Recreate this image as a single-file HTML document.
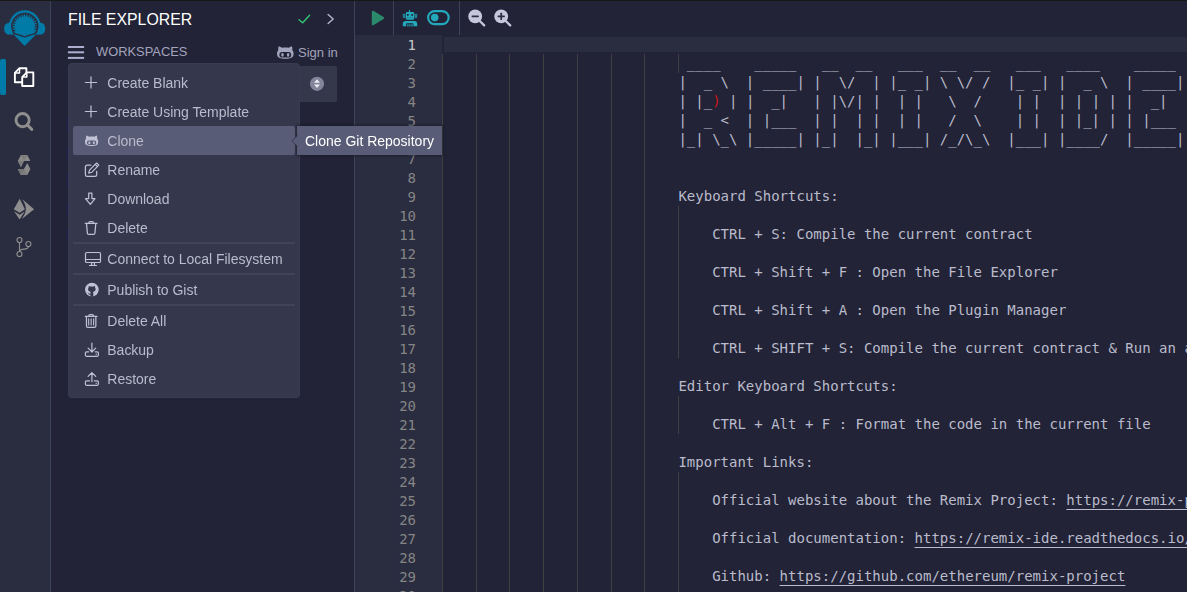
<!DOCTYPE html>
<html lang="en">
<head>
<meta charset="utf-8">
<title>Remix - Ethereum IDE</title>
<style>
html,body{margin:0;padding:0;}
body{width:1187px;height:592px;overflow:hidden;background:#222336;position:relative;
  font-family:"Liberation Sans",Arial,sans-serif;font-size:14px;color:#babbcc;}
.abs{position:absolute;}
#topstrip{left:0;top:0;width:1187px;height:1px;background:#181817;z-index:50;}
#iconpanel{left:0;top:0;width:50px;height:592px;background:#2a2c3f;border-right:1px solid #3f4358;}
#sidepanel{left:51px;top:0;width:303px;height:592px;background:#222336;border-right:1px solid #3f4358;}
#main{left:355px;top:0;width:832px;height:592px;background:#222336;overflow:hidden;}
#gutter{left:0;top:35px;width:87px;height:557px;background:#2a2c3f;}
.sep{position:absolute;top:0;width:1px;height:35px;background:#3f4358;}
/* editor */
#ed{position:absolute;left:-355px;top:0;width:1600px;height:592px;
  font-family:"DejaVu Sans Mono","Liberation Mono",monospace;font-size:14px;line-height:19px;}
.ln{position:absolute;margin-top:1px;left:355px;width:61px;text-align:right;height:19px;color:#858585;}
.ln.act{color:#c6c6c6;}
.cl{position:absolute;left:442.3px;letter-spacing:0.004px;height:19px;white-space:pre;color:#babbcc;}
.rb{color:rgba(255,18,18,.8);}
.lk{text-decoration:underline;text-decoration-thickness:1px;text-underline-offset:4px;text-decoration-skip-ink:none;}
.g{position:absolute;width:1px;background:#404040;display:block;}
#curline{left:442px;top:35px;width:760px;height:15px;border:2px solid #222336;background:#2a2c3f;}
/* side panel */
#title{left:68px;top:11px;font-size:15.85px;line-height:18px;color:#fff;white-space:nowrap;}
#ws{left:96px;top:44px;font-size:12.9px;line-height:15px;color:#a2a3bd;white-space:nowrap;}
#signin{left:298px;top:45px;font-size:13px;line-height:15px;color:#a2a3bd;white-space:nowrap;}
#select{left:200px;top:66px;width:137px;height:36px;background:#35374b;border-radius:2px;}
/* menu */
#menu{will-change:transform;left:68px;top:63px;width:232px;height:334.7px;background:#35384c;border-radius:4px;
  box-shadow:0 0 0 1px rgba(255,255,255,.025) inset;}
.mi{position:absolute;left:5px;width:222px;height:29px;border-radius:2px;}
.mi span{position:absolute;letter-spacing:-0.02px;left:34.3px;top:7px;line-height:17px;font-size:14px;color:#babbcc;white-space:nowrap;}
.mi svg{position:absolute;left:12px;top:7px;overflow:visible;}
.mi.hl{background:#595c76;}
.dv{position:absolute;left:5px;width:222px;height:2px;background:#40435a;}
#tip{left:297px;top:126px;width:145px;height:29px;background:#595c76;color:#fff;font-size:14px;
  line-height:31px;text-align:center;white-space:nowrap;box-shadow:0 0 2px 1px rgba(20,20,35,.55);}
#tiparrow{left:291px;top:135px;width:7px;height:12px;}
</style>
</head>
<body>
<div id="iconpanel" class="abs">
<svg class="abs" style="left:0px;top:0px;overflow:visible" width="50" height="50" viewBox="0 0 50 50" ><defs><clipPath id="lc1"><rect x="0" y="0" width="50" height="34.6"/></clipPath><clipPath id="lc2"><rect x="0" y="0" width="50" height="33.6"/></clipPath><clipPath id="lc3"><rect x="0" y="0" width="50" height="31.2"/></clipPath></defs><path d="M11 22.9 C7 22.1 4.1 24.5 4.1 28.6 C4.1 32.6 6.4 34.9 9 34.6 L13 34.6 L13 22.9 Z" fill="#007aa6"/><path d="M38.7 22.9 C42.7 22.1 45.3 24.5 45.3 28.6 C45.3 32.6 43.2 34.9 40.6 34.6 L36.6 34.6 L36.6 22.9 Z" fill="#007aa6"/><circle cx="24.8" cy="26.2" r="15.9" fill="#007aa6" clip-path="url(#lc1)"/><path d="M13.4 34.3 L36.2 34.3 L24.6 45.9 Z" fill="#007aa6"/><circle cx="24.8" cy="26.3" r="12.9" fill="none" stroke="#2a2c3f" stroke-width="1.5" clip-path="url(#lc2)"/><circle cx="24.8" cy="26.3" r="11.2" fill="none" stroke="#2a2c3f" stroke-width="2.3" stroke-dasharray="1.25 1.263" clip-path="url(#lc3)"/><path d="M12.9 33.2 L24.6 36.9 L36.5 33.2" fill="none" stroke="#2a2c3f" stroke-width="1.35"/></svg>
<div class="abs" style="left:0;top:58.8px;width:6.1px;height:36.1px;border-radius:1.2px 1.3px 1.3px 1.2px / 4px 2.2px 2.2px 4px;background:#007aa6"></div>
<svg class="abs" style="left:0px;top:50px;overflow:visible" width="50" height="50" viewBox="0 50 50 50" ><path d="M19.5 68.2 H26.4 V82.2 H14.9 V72.9 Z" fill="none" stroke="#fff" stroke-width="1.9" stroke-linejoin="round"/><path d="M19.5 68.2 V72.9 H14.9" fill="none" stroke="#fff" stroke-width="1.5" stroke-linejoin="round"/><path d="M26.8 72.4 H33.3 V86 H22.2 V77.1 Z" fill="#2a2c3f" stroke="#fff" stroke-width="1.9" stroke-linejoin="round"/><path d="M26.8 72.4 V77.1 H22.2" fill="none" stroke="#fff" stroke-width="1.5" stroke-linejoin="round"/></svg>
<svg class="abs" style="left:0px;top:100px;overflow:visible" width="50" height="40" viewBox="0 100 50 40" ><circle cx="22.6" cy="120.1" r="6.6" fill="none" stroke="#8e8e8e" stroke-width="2.9"/><path d="M27.8 125.4 L31.8 129.4" stroke="#8e8e8e" stroke-width="2.9" stroke-linecap="round"/></svg>
<svg class="abs" style="left:0px;top:150px;overflow:visible" width="50" height="30" viewBox="0 150 50 30" ><path d="M17.8 161 L20.9 155 L27.3 155 L30.4 161 L24 161 L20.9 167 Z" fill="#8a8a8a"/><path d="M20.7 155 L27.3 155 L24 161 Z" fill="#7d7d7d"/><path d="M17.8 161 L24 161 L20.9 167 Z" fill="#7a7a7a"/><path d="M30.4 169 L27.3 175 L20.7 175 L17.8 169 L23.9 169 L27.3 163 Z" fill="#8a8a8a"/><path d="M27.3 175 L20.7 175 L24 169 Z" fill="#7d7d7d"/><path d="M17.8 169 L24 169 L20.7 175 Z" fill="#747474"/></svg>
<svg class="abs" style="left:0px;top:190px;overflow:visible" width="50" height="40" viewBox="0 190 50 40" ><path d="M19.7 198.7 L24.9 209.3 L19.7 212.7 L13.8 209.3 Z" fill="#8e8e8e"/><path d="M14 211.2 L19.7 214.8 L24.7 211.4 L19.6 219.4 Z" fill="#8e8e8e"/><path d="M22.4 199.3 L34.1 209.3 L21.9 218.9 C26.6 211.6 27.6 207.6 22.4 199.3 Z" fill="#8e8e8e"/></svg>
<svg class="abs" style="left:0px;top:230px;overflow:visible" width="50" height="40" viewBox="0 230 50 40" ><g fill="none" stroke="#8e8e8e" stroke-width="1.15"><circle cx="19.5" cy="240" r="2.5"/><circle cx="19.5" cy="254" r="2.5"/><circle cx="28.4" cy="244" r="2.5"/><path d="M19.5 242.5 V251.5 M28.4 246.5 C28.4 248.7 26.6 249 24 249.1 C21.8 249.2 20 249.7 19.5 251.2"/></g></svg>
</div>

<div id="sidepanel" class="abs"></div>
<div id="title" class="abs">FILE EXPLORER</div>
<div id="ws" class="abs">WORKSPACES</div>
<div id="signin" class="abs">Sign in</div>
<div id="select" class="abs"></div>
<svg class="abs" style="left:68px;top:45px;overflow:visible" width="17" height="15" viewBox="0 0 17 15" ><g fill="#adaecf"><rect x="-0.1" y="1" width="16.2" height="2"/><rect x="-0.1" y="6.3" width="16.2" height="2"/><rect x="-0.1" y="11.9" width="16.2" height="2"/></g></svg>
<svg class="abs" style="left:296px;top:10px;overflow:visible" width="18" height="18" viewBox="0 0 18 18" ><path d="M3 9.7 L6.7 12.7 L13.6 5.3" fill="none" stroke="#2fc673" stroke-width="1.45" stroke-linecap="round" stroke-linejoin="round"/></svg>
<svg class="abs" style="left:322px;top:10px;overflow:visible" width="18" height="18" viewBox="0 0 18 18" ><path d="M6.1 4.5 L11.2 9 L6.1 13.5" fill="none" stroke="#b4b5cf" stroke-width="1.4" stroke-linecap="round" stroke-linejoin="round"/></svg>
<svg class="abs" style="left:277px;top:45px;overflow:visible" width="18" height="16" viewBox="0 -0 18 16" ><g transform="scale(1.257 1.24)"><path d="M1.5 1.0 C2.5 1.2 3.3 1.8 4.0 2.3 C5.8 1.9 7.6 1.9 9.3 2.3 C10 1.8 10.8 1.2 11.8 1.0 C12.3 2.2 12.3 3.2 12.1 4.0 C12.9 5.0 13.2 6.0 13.2 7.0 C13.2 10.4 10.6 11 6.6 11 C2.6 11 0 10.4 0 7.0 C0 6.0 0.3 5.0 1.1 4.0 C0.9 3.2 0.9 2.2 1.5 1.0 Z" fill="#a2a3bd"/><rect x="1.9" y="5.7" width="9.4" height="4.4" rx="2.1" fill="#222336"/><ellipse cx="4.35" cy="7.95" rx="1.0" ry="1.5" fill="#a2a3bd"/><ellipse cx="8.85" cy="7.95" rx="1.0" ry="1.5" fill="#a2a3bd"/></g></svg>
<svg class="abs" style="left:309px;top:75px;overflow:visible" width="16" height="16" viewBox="0 -0.8 16 16" ><circle cx="8" cy="8" r="7.1" fill="#83849a"/><path d="M8 3.4 L11 6.9 H5 Z M8 12.2 L11 8.7 H5 Z" fill="#ececf3"/></svg>

<div id="main" class="abs">
  <div id="gutter" class="abs"></div>
  <div id="ed">
    <div id="curline" class="abs"></div>
<i class="g" style="left:442px;top:54px;height:570px"></i>
<i class="g" style="left:476px;top:54px;height:570px"></i>
<i class="g" style="left:509px;top:54px;height:570px"></i>
<i class="g" style="left:543px;top:54px;height:570px"></i>
<i class="g" style="left:577px;top:54px;height:570px"></i>
<i class="g" style="left:611px;top:54px;height:570px"></i>
<i class="g" style="left:644px;top:54px;height:570px"></i>
<i class="g" style="left:678px;top:54px;height:19px"></i>
<i class="g" style="left:678px;top:206px;height:152px"></i>
<i class="g" style="left:678px;top:396px;height:38px"></i>
<i class="g" style="left:678px;top:472px;height:152px"></i>
<div class="ln act" style="top:35px">1</div>
<div class="ln" style="top:54px">2</div>
<div class="cl" style="top:54px">                             ____    _____   __  __   ___  __  __   ___   ____    _____ </div>
<div class="ln" style="top:73px">3</div>
<div class="cl" style="top:73px">                            |  _ \  | ____| |  \/  | |_ _| \ \/ /  |_ _| |  _ \  | ____|</div>
<div class="ln" style="top:92px">4</div>
<div class="cl" style="top:92px">                            | |_<span class="rb">)</span> | |  _|   | |\/| |  | |   \  /    | |  | | | | |  _|  </div>
<div class="ln" style="top:111px">5</div>
<div class="cl" style="top:111px">                            |  _ &lt;  | |___  | |  | |  | |   /  \    | |  | |_| | | |___ </div>
<div class="ln" style="top:130px">6</div>
<div class="cl" style="top:130px">                            |_| \_\ |_____| |_|  |_| |___| /_/\_\  |___| |____/  |_____|</div>
<div class="ln" style="top:149px">7</div>
<div class="ln" style="top:168px">8</div>
<div class="ln" style="top:187px">9</div>
<div class="cl" style="top:187px">                            Keyboard Shortcuts:</div>
<div class="ln" style="top:206px">10</div>
<div class="ln" style="top:225px">11</div>
<div class="cl" style="top:225px">                                CTRL + S: Compile the current contract</div>
<div class="ln" style="top:244px">12</div>
<div class="ln" style="top:263px">13</div>
<div class="cl" style="top:263px">                                CTRL + Shift + F : Open the File Explorer</div>
<div class="ln" style="top:282px">14</div>
<div class="ln" style="top:301px">15</div>
<div class="cl" style="top:301px">                                CTRL + Shift + A : Open the Plugin Manager</div>
<div class="ln" style="top:320px">16</div>
<div class="ln" style="top:339px">17</div>
<div class="cl" style="top:339px">                                CTRL + SHIFT + S: Compile the current contract &amp; Run an associated script</div>
<div class="ln" style="top:358px">18</div>
<div class="ln" style="top:377px">19</div>
<div class="cl" style="top:377px">                            Editor Keyboard Shortcuts:</div>
<div class="ln" style="top:396px">20</div>
<div class="ln" style="top:415px">21</div>
<div class="cl" style="top:415px">                                CTRL + Alt + F : Format the code in the current file</div>
<div class="ln" style="top:434px">22</div>
<div class="ln" style="top:453px">23</div>
<div class="cl" style="top:453px">                            Important Links:</div>
<div class="ln" style="top:472px">24</div>
<div class="ln" style="top:491px">25</div>
<div class="cl" style="top:491px">                                Official website about the Remix Project: <span class="lk">https://remix-project.org/</span></div>
<div class="ln" style="top:510px">26</div>
<div class="ln" style="top:529px">27</div>
<div class="cl" style="top:529px">                                Official documentation: <span class="lk">https://remix-ide.readthedocs.io/en/latest/</span></div>
<div class="ln" style="top:548px">28</div>
<div class="ln" style="top:567px">29</div>
<div class="cl" style="top:567px">                                Github: <span class="lk">https://github.com/ethereum/remix-project</span></div>
<div class="ln" style="top:586px">30</div>
<div class="ln" style="top:605px">31</div>
  </div>
  <div class="sep" style="left:38px"></div>
  <div class="sep" style="left:104px"></div>
<svg class="abs" style="left:15px;top:9px;overflow:visible" width="16" height="18" viewBox="0 0 16 18" ><path d="M3.1 3.0 L12.9 9 L3.1 15.0 Z" fill="#2b8a6c" stroke="#2b8a6c" stroke-width="2.6" stroke-linejoin="round"/></svg>
<svg class="abs" style="left:47px;top:10px;overflow:visible" width="15" height="17" viewBox="-0.8 0 15 17" ><g fill="#23a9bc"><rect x="6.1" y="0" width="1.2" height="2.6"/><rect x="3.05" y="2.1" width="8.35" height="7.6" rx="1.4"/><rect x="0" y="3.85" width="2.6" height="4.05" rx=".3" opacity=".68"/><rect x="11.8" y="3.85" width="2.6" height="4.05" rx=".3" opacity=".68"/><path d="M2.9 10.9 H11.5 A2.9 2.9 0 0 1 14.4 13.8 V16.2 H0 V13.8 A2.9 2.9 0 0 1 2.9 10.9 Z"/></g><g fill="#222336"><rect x="4.1" y="4" width="1.8" height="1.8" rx=".3"/><rect x="8.4" y="4" width="1.8" height="1.8" rx=".3"/><g opacity=".4"><rect x="4.2" y="7.2" width="1.3" height="1.2"/><rect x="6.55" y="7.2" width="1.3" height="1.2"/><rect x="8.9" y="7.2" width="1.3" height="1.2"/></g><path d="M3.3 16.2 V14.2 A1 1 0 0 1 4.3 13.2 H9.6 A1 1 0 0 1 10.6 14.2 V16.2 Z"/></g><g fill="#23a9bc"><rect x="4.5" y="14.2" width="1.15" height="2"/><rect x="6.6" y="14.2" width="1.15" height="2"/><rect x="8.7" y="14.2" width="1.15" height="2"/></g></svg>
<svg class="abs" style="left:72px;top:10px;overflow:visible" width="23" height="16" viewBox="0 0 23 16" ><rect x="1.1" y="1.1" width="20.6" height="13" rx="6.5" fill="none" stroke="#23a9bc" stroke-width="2.2"/><circle cx="7.7" cy="7.6" r="3.8" fill="#23a9bc"/></svg>
<svg class="abs" style="left:113px;top:9px;overflow:visible" width="18" height="18" viewBox="-0.2 -0.4 18 18" ><circle cx="7" cy="7" r="6.9" fill="#c6c7dd"/><path d="M11.8 11.9 L16 16" stroke="#c6c7dd" stroke-width="2.3" stroke-linecap="round"/><rect x="3.4" y="6.2" width="7.2" height="1.7" rx=".5" fill="#2c2d42"/></svg>
<svg class="abs" style="left:139px;top:9px;overflow:visible" width="18" height="18" viewBox="-0.2 -0.4 18 18" ><circle cx="7" cy="7" r="6.9" fill="#c6c7dd"/><path d="M11.8 11.9 L16 16" stroke="#c6c7dd" stroke-width="2.3" stroke-linecap="round"/><rect x="3.4" y="6.2" width="7.2" height="1.7" rx=".5" fill="#2c2d42"/><rect x="6.15" y="3.4" width="1.7" height="7.2" rx=".5" fill="#2c2d42"/></svg>
</div>

<div class="abs" style="left:67px;top:118px;width:1px;height:122px;background:repeating-linear-gradient(to bottom,#1d1f52 0,#1d1f52 15px,transparent 15px,transparent 28px)"></div>
<div id="menu" class="abs">
<div class="mi" style="top:5px"><svg width="16" height="14" viewBox="0 -0.5 16 14" ><path d="M0.4 7 H11.6 M6 1.4 V12.6" fill="none" stroke="#c0c1d5" stroke-width="1.2" stroke-linecap="round" stroke-linejoin="round"/></svg><span>Create Blank</span></div>
<div class="mi" style="top:34px"><svg width="16" height="14" viewBox="0 -0.5 16 14" ><path d="M0.4 7 H11.6 M6 1.4 V12.6" fill="none" stroke="#c0c1d5" stroke-width="1.2" stroke-linecap="round" stroke-linejoin="round"/></svg><span>Create Using Template</span></div>
<div class="mi hl" style="top:63px"><svg width="16" height="14" viewBox="0 -0.5 16 14" ><g transform="translate(0 0.9)"><g transform="scale(1.0 1.05)"><path d="M1.5 1.0 C2.5 1.2 3.3 1.8 4.0 2.3 C5.8 1.9 7.6 1.9 9.3 2.3 C10 1.8 10.8 1.2 11.8 1.0 C12.3 2.2 12.3 3.2 12.1 4.0 C12.9 5.0 13.2 6.0 13.2 7.0 C13.2 10.4 10.6 11 6.6 11 C2.6 11 0 10.4 0 7.0 C0 6.0 0.3 5.0 1.1 4.0 C0.9 3.2 0.9 2.2 1.5 1.0 Z" fill="#c0c1d5"/><rect x="1.9" y="5.7" width="9.4" height="4.4" rx="2.1" fill="#595c76"/><ellipse cx="4.35" cy="7.95" rx="1.0" ry="1.5" fill="#c0c1d5"/><ellipse cx="8.85" cy="7.95" rx="1.0" ry="1.5" fill="#c0c1d5"/></g></g></svg><span>Clone</span></div>
<div class="mi" style="top:92px"><svg width="16" height="14" viewBox="0 -0.5 16 14" ><path d="M5.8 2.7 H2.1 A1.7 1.7 0 0 0 0.4 4.4 V12.2 A1.7 1.7 0 0 0 2.1 13.9 H10 A1.7 1.7 0 0 0 11.7 12.2 V8.8" fill="none" stroke="#c0c1d5" stroke-width="1.25" stroke-linecap="round" stroke-linejoin="round"/><path d="M11.6 0.5 L13.8 2.7 L6.7 9.8 L3.7 10.6 L4.5 7.6 Z M10.2 1.9 L12.4 4.1" fill="none" stroke="#c0c1d5" stroke-width="1.15" stroke-linecap="round" stroke-linejoin="round"/></svg><span>Rename</span></div>
<div class="mi" style="top:121px"><svg width="16" height="14" viewBox="0 -0.5 16 14" ><path d="M3.7 1.6 H6.9 V7.1 H10 L5.3 12.9 L0.5 7.1 H3.7 Z" fill="none" stroke="#c0c1d5" stroke-width="1.2" stroke-linecap="round" stroke-linejoin="round"/></svg><span>Download</span></div>
<div class="mi" style="top:150px"><svg width="16" height="14" viewBox="0 -0.5 16 14" ><path d="M0.3 2.9 H11.9" fill="none" stroke="#c0c1d5" stroke-width="1.25" stroke-linecap="round" stroke-linejoin="round"/><path d="M3.6 2.8 C3.8 1.3 4.5 1.2 5.2 1.2 H7.1 C7.8 1.2 8.5 1.3 8.7 2.8" fill="none" stroke="#c0c1d5" stroke-width="1.2" stroke-linecap="round" stroke-linejoin="round"/><path d="M1.5 3.1 L2.4 12.7 A1.25 1.25 0 0 0 3.65 13.85 H8.65 A1.25 1.25 0 0 0 9.9 12.7 L10.8 3.1" fill="none" stroke="#c0c1d5" stroke-width="1.25" stroke-linecap="round" stroke-linejoin="round"/></svg><span>Delete</span></div>
<div class="dv" style="top:179px"></div>
<div class="mi" style="top:181px"><svg width="16" height="14" viewBox="0 -0.5 16 14" ><path d="M1.8 1 H14.2 A1.3 1.3 0 0 1 15.5 2.3 V9.7 A1.3 1.3 0 0 1 14.2 11 H1.8 A1.3 1.3 0 0 1 0.5 9.7 V2.3 A1.3 1.3 0 0 1 1.8 1 Z" fill="none" stroke="#c0c1d5" stroke-width="1.2" stroke-linecap="round" stroke-linejoin="round"/><path d="M0.6 8 H15.4" fill="none" stroke="#c0c1d5" stroke-width="1.0" stroke-linecap="round" stroke-linejoin="round"/><path d="M6.7 11 L6.5 13.6 M9.3 11 L9.5 13.6" fill="none" stroke="#c0c1d5" stroke-width="1.3" stroke-linecap="round" stroke-linejoin="round"/><path d="M4.4 14 H11.6" fill="none" stroke="#c0c1d5" stroke-width="1.1" stroke-linecap="round" stroke-linejoin="round"/></svg><span>Connect to Local Filesystem</span></div>
<div class="dv" style="top:210px"></div>
<div class="mi" style="top:212px"><svg width="16" height="14" viewBox="0 -0.5 16 14" ><circle cx="6.9" cy="7.05" r="6.85" fill="#c0c1d5"/><path d="M5.4 14.2 V12.1 C4.2 12.4 3.6 11.6 3.2 10.9 C3 10.6 2.7 10.4 2.4 10.3 C3.1 10.0 3.6 10.5 3.9 10.9 C4.3 11.4 4.8 11.4 5.4 11.2 V10.3 C5.4 9.9 5.55 9.6 5.8 9.4 C4.2 9.2 3.05 8.4 3.05 6.6 C3.05 5.9 3.3 5.4 3.7 5 C3.55 4.6 3.55 4.0 3.8 3.5 C4.5 3.5 5.05 3.85 5.45 4.15 C6.3 3.95 7.4 3.95 8.25 4.15 C8.65 3.85 9.2 3.5 9.9 3.5 C10.15 4.0 10.15 4.6 10 5 C10.4 5.4 10.65 5.9 10.65 6.6 C10.65 8.4 9.5 9.2 7.9 9.4 C8.15 9.6 8.3 9.9 8.3 10.3 V14.2 Z" fill="#35384c"/></svg><span>Publish to Gist</span></div>
<div class="dv" style="top:241px"></div>
<div class="mi" style="top:243px"><svg width="16" height="14" viewBox="0 -0.5 16 14" ><path d="M0.3 2.9 H11.9" fill="none" stroke="#c0c1d5" stroke-width="1.25" stroke-linecap="round" stroke-linejoin="round"/><path d="M3.6 2.8 C3.8 1.3 4.5 1.2 5.2 1.2 H7.1 C7.8 1.2 8.5 1.3 8.7 2.8" fill="none" stroke="#c0c1d5" stroke-width="1.2" stroke-linecap="round" stroke-linejoin="round"/><path d="M1.45 3.1 V12.4 A1.45 1.45 0 0 0 2.9 13.85 H9.4 A1.45 1.45 0 0 0 10.85 12.4 V3.1" fill="none" stroke="#c0c1d5" stroke-width="1.25" stroke-linecap="round" stroke-linejoin="round"/><path d="M3.7 5.3 V11.4 M6.15 5.3 V11.4 M8.6 5.3 V11.4" fill="none" stroke="#c0c1d5" stroke-width="1.1" stroke-linecap="round" stroke-linejoin="round"/></svg><span>Delete All</span></div>
<div class="mi" style="top:272px"><svg width="16" height="14" viewBox="0 -0.5 16 14" ><path d="M6.9 0.6 V9.2 M3.1 5.7 L6.9 9.5 L10.7 5.7" fill="none" stroke="#c0c1d5" stroke-width="1.2" stroke-linecap="round" stroke-linejoin="round"/><path d="M3.6 9.3 H1.6 A1.2 1.2 0 0 0 0.4 10.5 V12.6 A1.2 1.2 0 0 0 1.6 13.8 H12.2 A1.2 1.2 0 0 0 13.4 12.6 V10.5 A1.2 1.2 0 0 0 12.2 9.3 H10.2" fill="none" stroke="#c0c1d5" stroke-width="1.2" stroke-linecap="round" stroke-linejoin="round"/><circle cx="11.2" cy="11.7" r="0.7" fill="#c0c1d5"/></svg><span>Backup</span></div>
<div class="mi" style="top:301px"><svg width="16" height="14" viewBox="0 -0.5 16 14" ><path d="M6.9 10.2 V1.3 M3.1 4.9 L6.9 1.1 L10.7 4.9" fill="none" stroke="#c0c1d5" stroke-width="1.2" stroke-linecap="round" stroke-linejoin="round"/><path d="M4.6 9.3 H1.6 A1.2 1.2 0 0 0 0.4 10.5 V12.6 A1.2 1.2 0 0 0 1.6 13.8 H12.2 A1.2 1.2 0 0 0 13.4 12.6 V10.5 A1.2 1.2 0 0 0 12.2 9.3 H9.2" fill="none" stroke="#c0c1d5" stroke-width="1.2" stroke-linecap="round" stroke-linejoin="round"/><circle cx="11.2" cy="11.7" r="0.7" fill="#c0c1d5"/></svg><span>Restore</span></div>
</div>
<div id="tip" class="abs">Clone Git Repository</div>
<svg id="tiparrow" class="abs" viewBox="0 0 7 12"><path d="M7 0.5 L1 6 L7 11.5 Z" fill="#595c76"/><path d="M6.6 0.6 L0.8 6 L6.6 11.4" fill="none" stroke="#3a3c52" stroke-width="1"/></svg>
<div id="topstrip" class="abs"></div>
</body>
</html>
